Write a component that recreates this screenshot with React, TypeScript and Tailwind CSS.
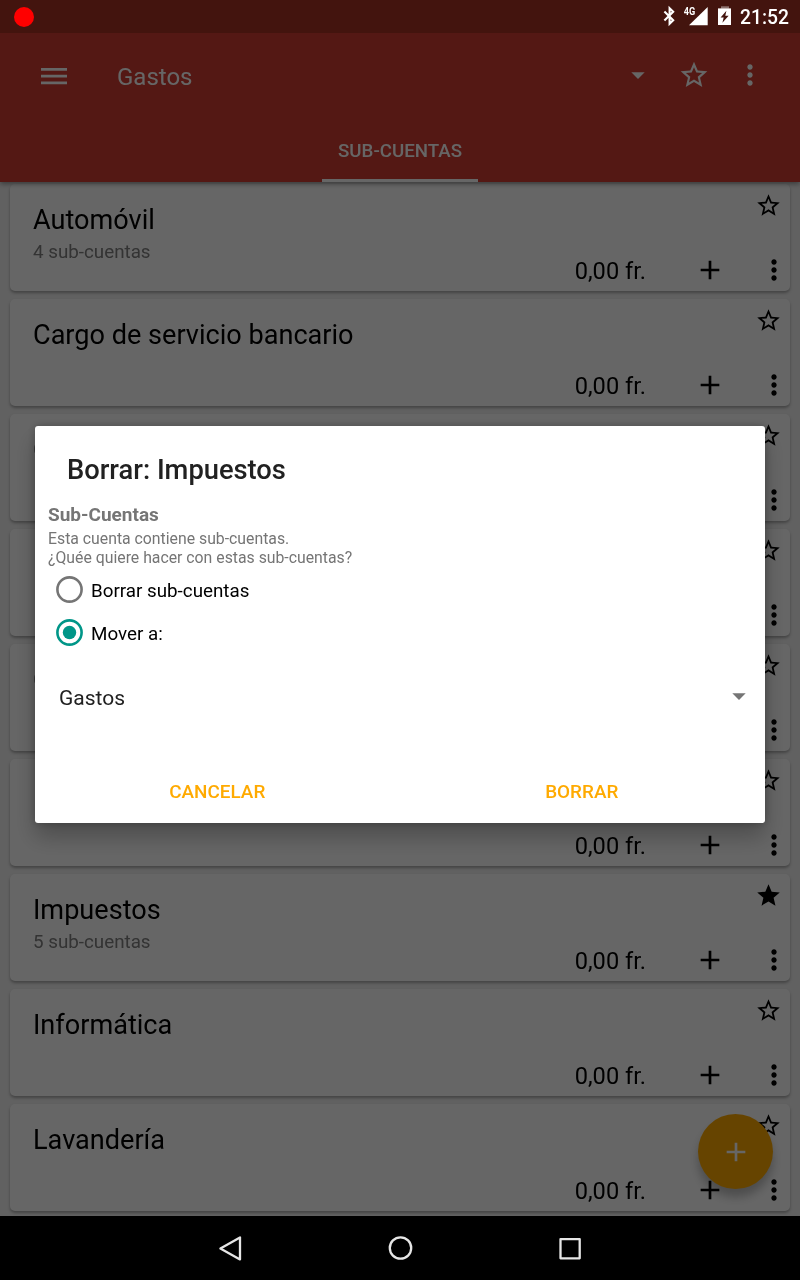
import { MdAdd, MdArrowDropDown, MdMoreVert, MdStar, MdStarBorder } from "react-icons/md";

type Account = { id: number; name?: string; detail?: string; starred?: boolean };

const accounts: Account[] = [
  { id: 1, name: "Automóvil", detail: "4 sub-cuentas" },
  { id: 2, name: "Cargo de servicio bancario" },
  { id: 3, name: "C" },
  { id: 4 },
  { id: 5, name: "C" },
  { id: 6 },
  { id: 7, name: "Impuestos", detail: "5 sub-cuentas", starred: true },
  { id: 8, name: "Informática" },
  { id: 9, name: "Lavandería" },
];

function StatusBar() {
  return (
    <div className="relative z-30 flex h-[33px] items-center bg-[#43140e] pl-[14px] pr-[11px] text-white">
      <div className="size-[20px] rounded-full bg-[#ff0000]" />
      <svg className="ml-auto shrink-0" width="70" height="33" viewBox="0 0 70 33">
        <path d="M2.4 11.5 L11.2 20.3 L7.6 23.8 V8.2 L11.2 11.8 L2.4 20.6" fill="none" stroke="#fff" strokeWidth="2.1" />
        <text x="21.8" y="15.3" className="fill-white font-['Roboto'] text-[10px] font-bold" textLength="11.5" lengthAdjust="spacingAndGlyphs">4G</text>
        <path d="M45.7 7 V25.3 H27 Z" fill="#fff" />
        <path d="M59 6.3 h8 v2.4 h-8 z" fill="#8e7370" />
        <path d="M56 8.4 h13 v16.6 h-13 z" fill="#fff" />
        <path d="M64.4 10.8 L58.6 17.4 H61.7 L60.4 22.8 L66.6 15.7 H63.3 Z" fill="#43140e" />
      </svg>
      <span className="ml-[8px] w-[49px] whitespace-nowrap pt-[2px] text-[19.3px] font-medium leading-none">21:52</span>
    </div>
  );
}

function Header() {
  return (
    <header className="relative z-10 flex h-[149px] flex-col bg-[#d23e32] text-white shadow-[0_2px_5px_rgba(0,0,0,0.4)]">
      <div className="flex h-[85px] items-center pl-[41px] pr-[34.5px]">
        <svg width="26" height="18" viewBox="0 0 26 18">
          <path d="M0 2.4 H26 M0 9.1 H26 M0 15.8 H26" stroke="currentColor" strokeWidth="2.7" />
        </svg>
        <h1 className="ml-[50px] mt-[2px] text-[24px] leading-none">Gastos</h1>
        <MdArrowDropDown className="mb-[1px] ml-auto size-8" />
        <MdStarBorder className="mb-[1px] ml-[24px] size-8" />
        <MdMoreVert className="mb-[1px] ml-[23.5px] size-8" />
      </div>
      <div className="flex flex-1 justify-center">
        <div className="flex w-[156px] items-center justify-center border-b-[3px] border-white pt-[6px] text-[18.7px] font-medium">
          SUB-CUENTAS
        </div>
      </div>
    </header>
  );
}

function AccountCard({ name, detail, starred }: Account) {
  const Star = starred ? MdStar : MdStarBorder;
  return (
    <li className="flex h-[107px] shrink-0 flex-col rounded-[5px] bg-white shadow-[0_2px_3px_rgba(0,0,0,0.3)]">
      <div className="flex h-[70px] justify-between pl-[23px] pr-[8px]">
        <div className="pt-[20px]">
          {name && <div className="text-[27.1px] leading-[32px]">{name}</div>}
          {detail && <div className="text-[18.8px] leading-[32px] text-[#808080]">{detail}</div>}
        </div>
        <Star className="mt-[8px] size-[27px]" />
      </div>
      <div className="flex h-[32px] items-center justify-end">
        <span className="mr-[48px] pt-[3px] text-[23.6px] leading-none">0,00 fr.</span>
        <MdAdd className="mr-[32px] size-8" />
        <MdMoreVert className="size-8" />
      </div>
    </li>
  );
}

function Radio({ label, checked }: { label: string; checked?: boolean }) {
  return (
    <label className="flex h-[43px] items-center">
      <svg width="27" height="27" viewBox="0 0 27 27">
        <circle cx="13.5" cy="13.5" r="12.1" fill="none" strokeWidth="2.6" stroke={checked ? "#009688" : "#757575"} />
        {checked && <circle cx="13.5" cy="13.5" r="6.7" fill="#009688" />}
      </svg>
      <span className="ml-[8px] mt-[3px] text-[18.8px] leading-none text-black">{label}</span>
    </label>
  );
}

function DeleteDialog() {
  return (
    <div role="dialog" className="flex h-[397px] w-[730px] flex-col rounded-[3px] bg-white shadow-[0_14px_22px_rgba(0,0,0,0.25),0_0_8px_rgba(0,0,0,0.25)]">
      <h2 className="pl-[32px] pt-[28px] text-[27.3px] font-medium leading-[32px] text-[#212121]">Borrar: Impuestos</h2>
      <div className="pl-[13px] pt-[17px] text-[#757575]">
        <h3 className="text-[19px] font-bold leading-[24px]">Sub-Cuentas</h3>
        <p className="mt-[2px] text-[15.8px] leading-[19px]">
          Esta cuenta contiene sub-cuentas.
          <br />
          ¿Quée quiere hacer con estas sub-cuentas?
        </p>
      </div>
      <div className="pl-[21px] pt-[1px]">
        <Radio label="Borrar sub-cuentas" />
        <Radio label="Mover a:" checked />
      </div>
      <div className="mt-[18px] flex h-[48px] items-center justify-between pl-[24px] pr-[10px]">
        <span className="mt-[5px] text-[21px] leading-none text-[#212121]">Gastos</span>
        <MdArrowDropDown className="size-8 text-[#757575]" />
      </div>
      <div className="mt-[48px] grid h-[48px] grid-cols-2 pr-[1px] text-[18.9px] font-medium text-[#ffaa00]">
        <button>CANCELAR</button>
        <button>BORRAR</button>
      </div>
    </div>
  );
}

function NavigationBar() {
  return (
    <nav className="relative z-30 flex h-[64px] items-center justify-center gap-[138px] bg-black text-[#e6e6e6]">
      <svg width="32" height="32" viewBox="0 0 32 32" fill="none" stroke="currentColor" strokeWidth="2.3" strokeLinejoin="round">
        <path d="M26 5.4 V27.4 L6.4 16.5 Z" />
      </svg>
      <svg width="32" height="32" viewBox="0 0 32 32" fill="none" stroke="currentColor" strokeWidth="2.3">
        <circle cx="16.5" cy="16" r="10.7" />
      </svg>
      <svg width="32" height="32" viewBox="0 0 32 32" fill="none" stroke="currentColor" strokeWidth="2.3" strokeLinejoin="round">
        <rect x="6.5" y="7.1" width="19.2" height="19.2" />
      </svg>
    </nav>
  );
}

export default function App() {
  return (
    <div className="relative flex h-[1280px] w-[800px] flex-col overflow-hidden bg-[#f2f2f2] font-['Roboto',sans-serif] text-black">
      <StatusBar />
      <Header />
      <ul className="flex min-h-0 flex-1 flex-col gap-[8px] overflow-hidden px-[10px] pt-[2px] will-change-transform">
        {accounts.map((account) => (
          <AccountCard key={account.id} {...account} />
        ))}
      </ul>
      <NavigationBar />
      <button className="absolute left-[698px] top-[1114px] flex size-[75px] items-center justify-center rounded-full bg-[#ffaa00] text-white shadow-[0_8px_10px_rgba(0,0,0,0.25)]">
        <MdAdd className="size-8" />
      </button>
      <div className="absolute inset-0 z-20 flex justify-center bg-black/60 pt-[426px]">
        <DeleteDialog />
      </div>
    </div>
  );
}
